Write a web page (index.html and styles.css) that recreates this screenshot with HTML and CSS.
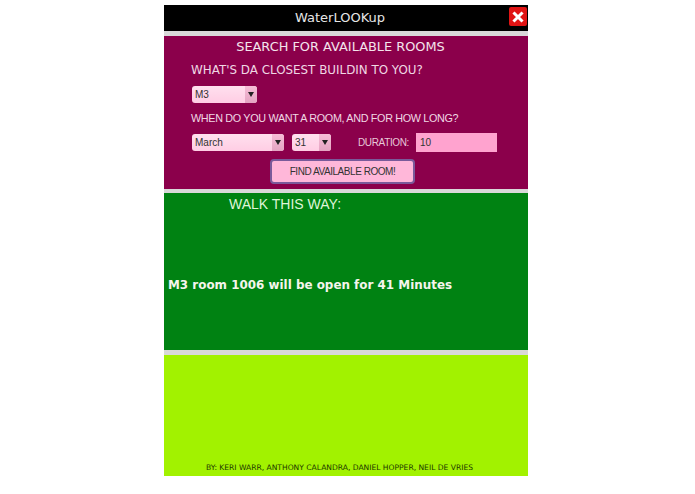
FILE: index.html
```html
<!DOCTYPE html>
<html lang="en">
<head>
<meta charset="utf-8">
<title>WaterLOOKup</title>
<link rel="stylesheet" href="styles.css">
</head>
<body>
<main class="app">
  <header class="titlebar">
    <h1 class="title">WaterLOOKup</h1>
    <button class="close" type="button" aria-label="Close">
      <svg viewBox="0 0 18 18" width="18" height="18"><path d="M5.5 5.5 L12.5 12.5 M12.5 5.5 L5.5 12.5" stroke="#fff" stroke-width="3" stroke-linecap="square"/></svg>
    </button>
  </header>
  <section class="search">
    <h2 class="search-title">SEARCH FOR AVAILABLE ROOMS</h2>
    <p class="question">WHAT'S DA CLOSEST BUILDIN TO YOU?</p>
    <div class="row building-row">
      <div class="select-box building"><select class="select"><option>M3</option></select><span class="arrow"></span></div>
    </div>
    <p class="question small">WHEN DO YOU WANT A ROOM, AND FOR HOW LONG?</p>
    <div class="row date-row">
      <div class="select-box month"><select class="select"><option>March</option></select><span class="arrow"></span></div>
      <div class="select-box day"><select class="select"><option>31</option></select><span class="arrow"></span></div>
      <label class="duration-label" for="duration">DURATION:</label>
      <input class="duration" id="duration" type="text" value="10">
    </div>
    <div class="submit-row"><button class="submit" type="button">FIND AVAILABLE ROOM!</button></div>
  </section>
  <section class="results">
    <h2 class="results-title">WALK THIS WAY:</h2>
    <p class="result">M3 room 1006 will be open for 41 Minutes</p>
  </section>
  <footer class="credits">
    <p class="byline">BY: KERI WARR, ANTHONY CALANDRA, DANIEL HOPPER, NEIL DE VRIES</p>
  </footer>
</main>
</body>
</html>
```
FILE: styles.css
```css
* { box-sizing: border-box; }
html, body { margin: 0; padding: 0; background: #fff; }
body { height: 494px; overflow: hidden; font-family: "DejaVu Sans", sans-serif; }
.app {
  width: 364px;
  height: 471px;
  margin: 5px 0 0 164px;
  background: #d9d9d9;
  display: flex;
  flex-direction: column;
  gap: 4.5px;
}
.titlebar {
  height: 26px;
  background: #000;
  display: flex;
  align-items: center;
  justify-content: center;
  padding: 0 12px 2px 0;
  position: relative;
  flex: none;
}
.title { margin: 0; font-size: 13px; font-weight: 400; color: #e6e6e6; line-height: 1; }
.close {
  position: absolute;
  right: 1px;
  top: 2px;
  width: 18px;
  height: 19px;
  padding: 0;
  border: 0;
  border-radius: 2px;
  background: #e01414;
  display: flex;
  align-items: center;
  justify-content: center;
}
.search {
  height: 153px;
  flex: none;
  background: #8b004b;
  padding: 4px 0 0;
  display: flex;
  flex-direction: column;
}
.search-title { margin: 0; padding-right: 11px; text-align: center; font-size: 12.9px; line-height: 14px; font-weight: 400; color: #f4e4ec; }
.question { margin: 9px 0 0 27px; font-size: 11.9px; line-height: 14px; color: #f0d8e4; }
.question.small { margin: 8px 0 0 27px; font-family: "Liberation Sans", sans-serif; font-size: 10.8px; letter-spacing: -0.33px; }
.row { display: flex; align-items: center; margin-left: 28px; }
.building-row { margin-top: 9px; }
.date-row { margin-top: 8px; gap: 8px; height: 19px; }
.select-box { position: relative; height: 17px; flex: none; }
.building { width: 65px; }
.month { width: 92px; }
.day { width: 39px; }
.select {
  display: block;
  appearance: none;
  -webkit-appearance: none;
  width: 100%;
  height: 100%;
  margin: 0;
  padding: 0 14px 0 3px;
  border: 0;
  border-radius: 3px;
  background: linear-gradient(#ffe0ee, #ffcde4);
  color: #333;
  font-family: "Liberation Sans", sans-serif;
  font-size: 10px;
}
.arrow {
  position: absolute;
  right: 0;
  top: 0;
  width: 12px;
  height: 17px;
  border-radius: 0 3px 3px 0;
  background: linear-gradient(#f7bdd7, #e4a4c2);
  pointer-events: none;
}
.arrow::after {
  content: "";
  position: absolute;
  left: 3px;
  top: 6px;
  border-left: 3px solid transparent;
  border-right: 3px solid transparent;
  border-top: 5px solid #222;
}
.duration-label {
  margin-left: 19px;
  font-family: "Liberation Sans", sans-serif;
  font-size: 10px;
  letter-spacing: -0.36px;
  color: #e8c8d8;
}
.duration {
  width: 81px;
  height: 19px;
  margin-left: -1px;
  padding: 0 4px;
  border: 0;
  background: #ffa3cf;
  color: #333;
  font-family: "Liberation Sans", sans-serif;
  font-size: 10px;
}
.submit-row { display: flex; justify-content: center; margin-top: 7px; padding-right: 7px; }
.submit {
  width: 145px;
  height: 25px;
  padding: 0;
  border: 2px solid #7a5a9a;
  border-radius: 4px;
  background: #ffb7d9;
  color: #333;
  font-family: "Liberation Sans", sans-serif;
  font-size: 10px;
  letter-spacing: -0.45px;
}
.results {
  height: 157px;
  flex: none;
  background: #008212;
  display: flex;
  flex-direction: column;
}
.results-title { margin: 3px 0 0 65px; font-family: "Liberation Sans", sans-serif; font-size: 14px; line-height: 16px; font-weight: 400; color: #dff5d8; }
.result { margin: 65px 0 0 4px; font-size: 11.93px; line-height: 16px; font-weight: 700; color: #f5f5ec; }
.credits {
  flex: 1;
  background: #a2f200;
  display: flex;
  flex-direction: column;
  justify-content: flex-end;
}
.byline { margin: 0 0 3px; text-align: center; padding-right: 13px; font-size: 7.57px; line-height: 10px; color: #1c3800; }
```
